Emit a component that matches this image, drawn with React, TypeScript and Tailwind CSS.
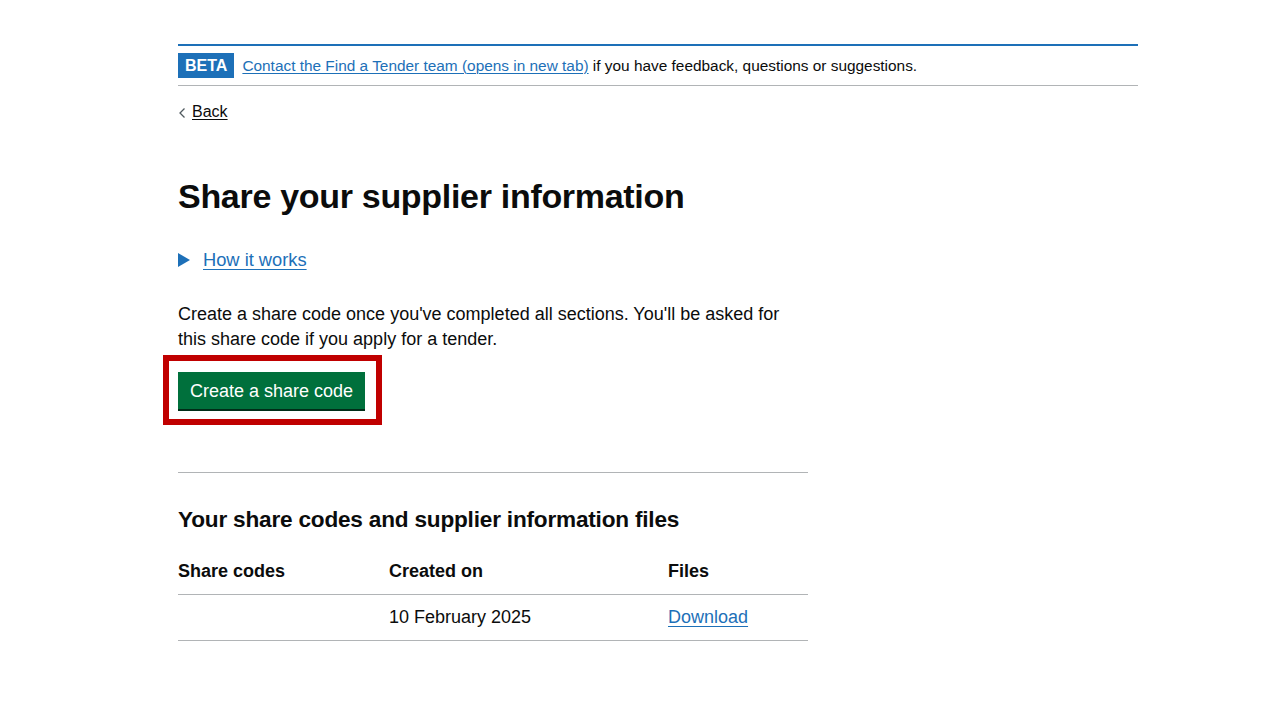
import React from "react";

export default function App() {
  return (
    <div className="min-h-[720px] bg-white text-[#0b0c0c]" style={{ fontFamily: '"Liberation Sans", Arial, sans-serif' }}>
      <div className="ml-[178px] w-[960px] pt-[44px]">
        {/* Phase banner */}
        <div className="border-t-2 border-[#1d70b8] border-b border-b-[#b1b4b6] h-[42px] flex items-center gap-[8px]">
          <span className="bg-[#1d70b8] text-white font-bold text-[16px] px-[7px] h-[25px] flex items-center leading-none">BETA</span>
          <p className="text-[15.4px] leading-none">
            <a href="#" className="text-[#1d70b8] underline underline-offset-2 decoration-1">Contact the Find a Tender team (opens in new tab)</a> if you have feedback, questions or suggestions.
          </p>
        </div>

        {/* Back link */}
        <div className="mt-[14px] flex items-center gap-[6px] text-[16px]">
          <svg width="8" height="12" viewBox="0 0 8 12" className="mt-[1px]">
            <path d="M6.5 1.5 L2 6 L6.5 10.5" fill="none" stroke="#505a5f" strokeWidth="1.3" />
          </svg>
          <a href="#" className="text-[#0b0c0c] underline underline-offset-2 decoration-1">Back</a>
        </div>

        <main className="w-[630px]">
          <h1 className="mt-[52px] text-[34px] font-bold leading-[40px] tracking-[-0.3px]">Share your supplier information</h1>

          <div className="mt-[30px] flex items-center gap-[13px] text-[18.3px]">
            <svg width="12" height="14" viewBox="0 0 12 14">
              <path d="M0 0 L12 7 L0 14 Z" fill="#1d70b8" />
            </svg>
            <a href="#" className="text-[#1d70b8] underline underline-offset-[3px] decoration-1">How it works</a>
          </div>

          <p className="mt-[29px] text-[18px] leading-[25px] w-[620px]">
            Create a share code once you've completed all sections. You'll be asked for this share code if you apply for a tender.
          </p>

          <div className="mt-[3px] ml-[-15px] inline-flex border-[6px] border-[#c00000] pt-[11px] pb-[10px] pl-[9px] pr-[11px]">
            <button className="bg-[#00703c] text-white text-[18px] h-[37px] px-[12px] shadow-[0_2px_0_#002d18] leading-none">
              Create a share code
            </button>
          </div>

          <hr className="mt-[47px] border-0 border-t border-[#b1b4b6]" />

          <h2 className="mt-[32px] text-[22.6px] font-bold leading-[30px] tracking-[-0.2px]">Your share codes and supplier information files</h2>

          <table className="mt-[14px] w-full text-[18px] text-left border-collapse">
            <thead>
              <tr className="border-b border-[#b1b4b6]">
                <th className="font-bold w-[211px] py-[10px] leading-[25px]">Share codes</th>
                <th className="font-bold w-[279px] py-[10px] leading-[25px]">Created on</th>
                <th className="font-bold py-[10px] leading-[25px]">Files</th>
              </tr>
            </thead>
            <tbody>
              <tr className="border-b border-[#b1b4b6]">
                <td className="py-[10px] leading-[25px]"></td>
                <td className="py-[10px] leading-[25px]">10 February 2025</td>
                <td className="py-[10px] leading-[25px]">
                  <a href="#" className="text-[#1d70b8] underline underline-offset-[3px] decoration-1">Download</a>
                </td>
              </tr>
            </tbody>
          </table>
        </main>
      </div>
    </div>
  );
}
